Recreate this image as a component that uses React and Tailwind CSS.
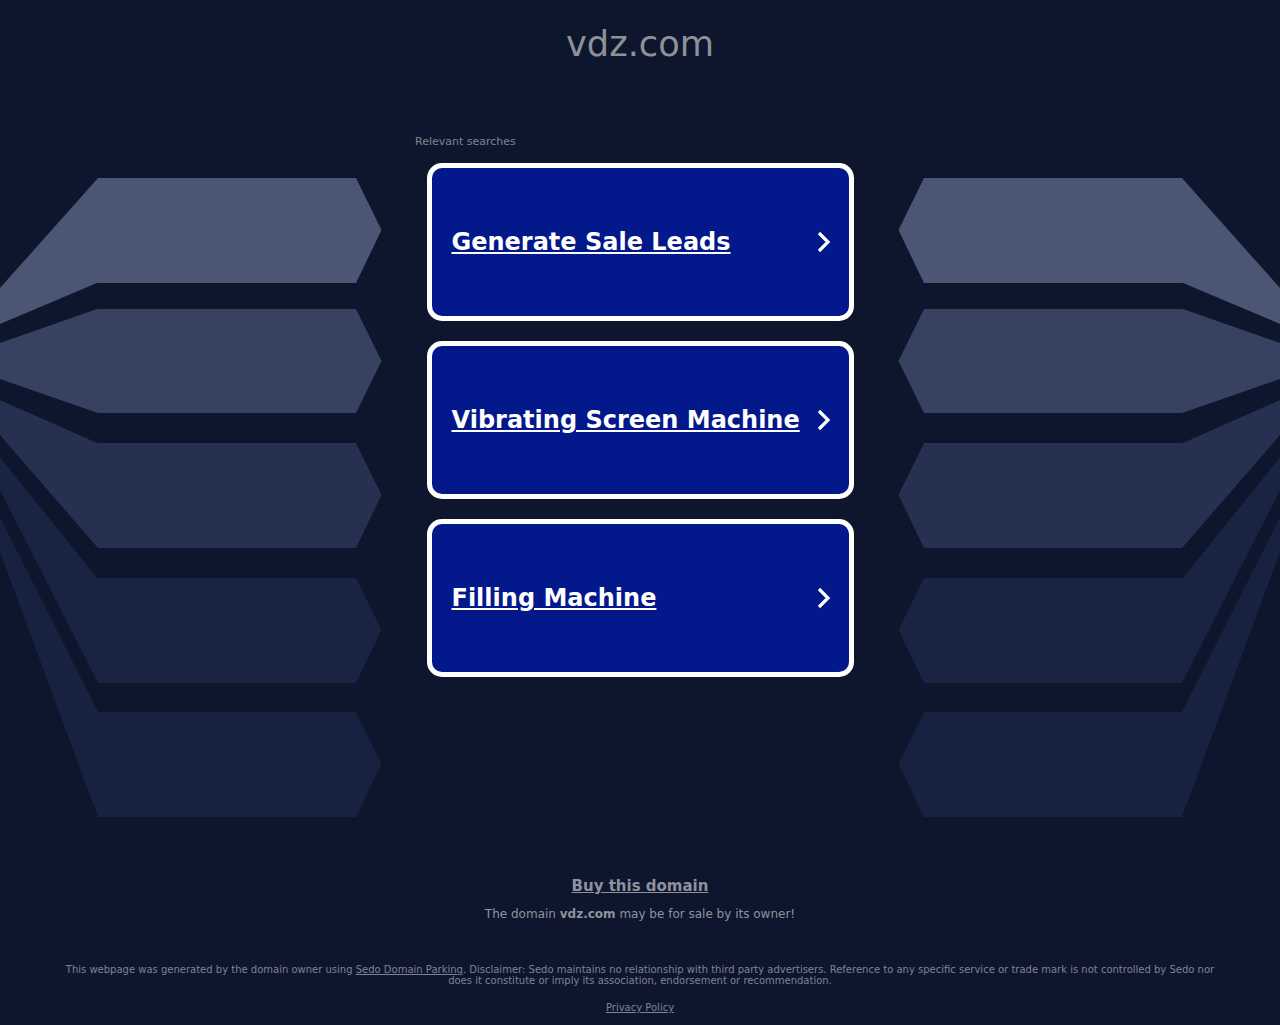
const left = [
  { c: "#4a5673", p: "98,178 356,178 381.5,230 356,283 97,283 0,324 0,288" },
  { c: "#374260", p: "97,309 356,309 381.5,361 356,413 98,413 0,379 0,343" },
  { c: "#263051", p: "97,443 356,443 381.5,495 356,548 98,548 0,435 0,400" },
  { c: "#192442", p: "97,578 356,578 381.5,630 356,683 98,683 0,490 0,457" },
  { c: "#172241", p: "98,712 356,712 381.5,764 356,817 98,817 0,552 0,517" },
];

const mirror = (p) =>
  p
    .split(" ")
    .map((pt) => {
      const [x, y] = pt.split(",");
      return `${1280 - Number(x)},${y}`;
    })
    .join(" ");

function Backdrop() {
  return (
    <svg className="absolute left-0 top-0 w-[1280px] h-[1025px]" viewBox="0 0 1280 1025" aria-hidden="true">
      {left.map((s) => (
        <g key={s.p} fill={s.c}>
          <polygon points={s.p} />
          <polygon points={mirror(s.p)} />
        </g>
      ))}
    </svg>
  );
}

function Card({ label }) {
  return (
    <a className="flex items-center justify-between w-[427px] h-[158px] rounded-[15px] border-[5px] border-white bg-[#03188a] pl-5 pr-4 text-white" href="#">
      <span className="text-[24px] leading-[30px] font-bold underline whitespace-nowrap">{label}</span>
      <svg width="18" height="24" viewBox="0 0 18 24" fill="none" stroke="#fff" strokeWidth="3.2" strokeLinecap="butt" strokeLinejoin="miter">
        <path d="M4 3 L13 12 L4 21" />
      </svg>
    </a>
  );
}

export default function App() {
  return (
    <div className="relative w-full h-[1025px] overflow-hidden bg-[#0e162e] font-['DejaVu_Sans',sans-serif]">
      <Backdrop />
      <div className="relative flex flex-col items-center h-full">
        <h1 className="mt-[20px] text-[35.2px] leading-[47px] font-normal text-[#8e9198]">vdz.com</h1>
        <div className="w-[450px] mt-[67px] text-[11px] leading-[16px] text-[#7f838f]">Relevant searches</div>
        <div className="flex flex-col gap-5 mt-[13px]">
          <Card label="Generate Sale Leads" />
          <Card label="Vibrating Screen Machine" />
          <Card label="Filling Machine" />
        </div>
        <a href="#" className="mt-[199px] text-[15px] leading-[20px] font-bold underline text-[#8e929c]">Buy this domain</a>
        <p className="mt-[9px] text-[12px] leading-[18px] text-[#8e929c]">
          The domain <b>vdz.com</b> may be for sale by its owner!
        </p>
        <p className="mt-[41px] w-[1160px] text-center text-[10px] leading-[11px] text-[#7f838f]">
          This webpage was generated by the domain owner using <a href="#" className="underline">Sedo Domain Parking</a>. Disclaimer: Sedo maintains no relationship with third party advertisers. Reference to any specific service or trade mark is not controlled by Sedo nor does it constitute or imply its association, endorsement or recommendation.
        </p>
        <a href="#" className="mt-[15px] text-[10px] leading-[14px] underline text-[#7f838f]">Privacy Policy</a>
      </div>
    </div>
  );
}
